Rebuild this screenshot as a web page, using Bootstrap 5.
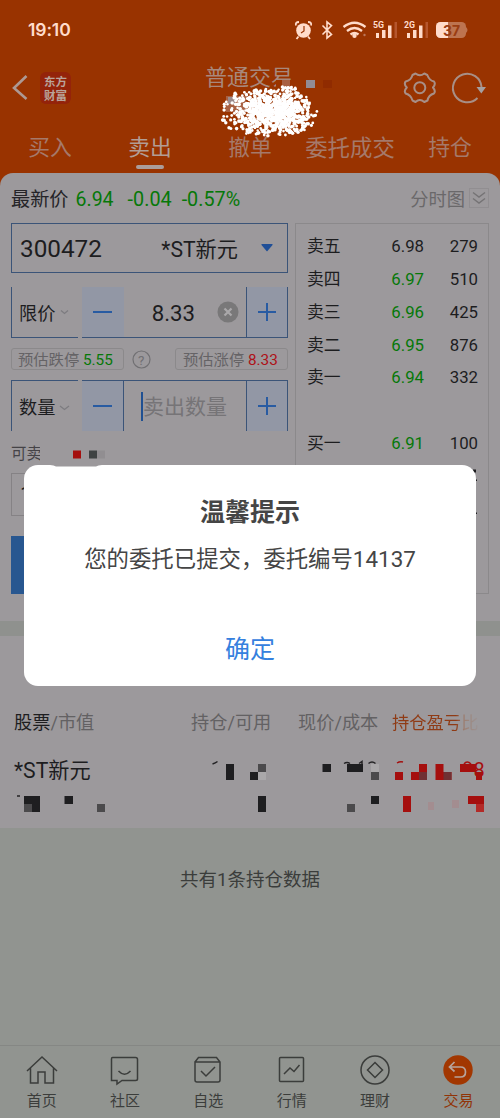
<!DOCTYPE html>
<html lang="zh-CN">
<head>
<meta charset="utf-8">
<meta name="viewport" content="width=device-width, initial-scale=1">
<title>普通交易</title>
<link rel="stylesheet" href="https://cdn.jsdelivr.net/npm/bootstrap@5.3.0/dist/css/bootstrap.min.css">
<script src="https://cdn.jsdelivr.net/npm/bootstrap@5.3.0/dist/js/bootstrap.bundle.min.js"></script>
<style>
body{margin:0;background:#919490;color:#1d1d1f;font-family:Roboto,"Noto Sans CJK SC",sans-serif;overflow:hidden}
svg{display:block;flex:none}
.screen{width:500px;height:1118px;overflow:hidden}
.top{background:#993300;color:#a99b98;height:187px}
.status{height:60px;padding:0 32px 0 28px;color:#ffdccb}
.clock{font:600 17.5px/60px Inter,sans-serif;letter-spacing:-.1px}
.titlebar{height:56px;padding:0 13px 0 11px}
.brand{width:31px;height:32px;border-radius:6px;background:#94230a;color:#b9a49c;font:600 11.5px/14px "Noto Sans CJK SC",sans-serif;margin-left:12px}
.title{left:205px;top:1px;font-size:22px;line-height:34px;color:#a8887c}
.tabs{height:57px;font-size:21.8px;line-height:64px;color:#a5796a}
.tabs .on{color:#b29d95}
.tabs .on i{position:absolute;width:28px;height:4px;border-radius:2px;background:#ab9d9a;left:36px;top:49px}
.panel{height:448px;margin-top:-14px;border-radius:13px 13px 0 0;background:#9c999c;padding:0 11px}
.quote{height:50px;font-size:19.5px;line-height:53px;color:#067808}
.form-col{width:277px}
.blue{border:1px solid #3b5478}
.stock{height:50px;font-size:24.3px;padding:2px 14px 0 8px}
.line-b{border-bottom:1px solid #3b5478}
.line-t{border-top:1px solid #3b5478}
.line-l{border-left:1px solid #3b5478}
.line-r{border-right:1px solid #3b5478}
.tint{background:#9297a5;width:42px}
.num-row{height:51px}
.pick{width:67px;padding:3px 0 0 7px;font-size:18.2px;margin-right:4px}
.hint{height:22px;border:1px solid #8b898b;border-radius:3px;font-size:15.3px;line-height:20px;color:#656366;padding:1px 0 0 6px}
.up{color:#ae1218}.down{color:#067808}
.caret-line{width:2px;height:29px;background:#205092}
.gap-band{height:15px;background:#8f918e}
.depth{width:194px;height:371px;border:1px solid #8b898b;padding:6px 10px 0 11px;font-size:16.8px}
.depth .d-flex{height:32.9px}
.depth .text-end{width:54px}
.hold{height:192px;background:#9c999c}
.colhead{font-size:18.2px;line-height:30px;color:#636163;padding:72px 0 0 14px;height:102px;white-space:nowrap}
.total{height:217px;padding-top:37px;font-size:18.5px;line-height:30px;color:#3b3d3b;text-align:center}
.bottom-nav{height:73px;border-top:1px solid #858784;font-size:15px;color:#3b3d3b}
.bottom-nav .cell{flex:0 0 83.35px;padding-top:8px}
.bottom-nav span{line-height:22px;margin-top:4px}
.stroke{fill:none;stroke:currentColor;stroke-width:1.5}
.dialog-box{left:24px;top:465px;width:452px;height:221px;border-radius:14px;background:#fff;color:#454545;text-align:center}
.mosaic{left:0;top:0;pointer-events:none}
</style>
</head>
<body>
<main class="screen position-relative d-flex flex-column">
<header class="top flex-shrink-0">
  <div class="status d-flex align-items-center justify-content-between">
    <span class="clock">19:10</span>
    <svg width="176" height="24" viewBox="293 18 176 24" fill="#ffdccb">
      <circle cx="304.500" cy="30.500" r="7.300"/><path d="M297 25.500Q296 22 300 22M309 22q4 0 3 3.500M299.500 36.500l-2 2.500M309 36.500l2 2.500" fill="none" stroke="#ffdccb" stroke-width="1.800"/><path d="M305 26v5l-3 2" fill="none" stroke="#993300" stroke-width="1.200"/>
      <path d="M323.500 25.500l9 9-4.500 3.500V22l4.500 3.500-9 9" fill="none" stroke="#ffdccb" stroke-width="1.600"/>
      <g fill="none" stroke="#ffdccb" stroke-width="2.300"><path d="M344.500 27q11-8.500 22 0M348 31q7.500-6 15 0M351.500 34.500q4-3 8 0"/></g><circle cx="355.500" cy="35.700" r="2.200"/><circle cx="365.500" cy="35" r="1.200" fill="#bc7659"/>
      <g font-family="Roboto" font-weight="700" font-size="8.800"><text x="374" y="28">5G</text><text x="405" y="28">2G</text></g>
      <path d="M377 33h3v5h-3zM383 30h3.500v8H383zM389 25.500h3.500V38H389zM408 33h3v5h-3zM414 30h3.500v8H414zM420 25.500h3.500V38H420z"/>
      <path fill="#b5562d" d="M395.500 22h2.500v16h-2.500zM426.500 22h2.500v16h-2.500z"/>
      <rect x="437" y="22" width="30" height="16" rx="4.500" fill="#bd7450"/><path d="M441.500 22h7.500v16h-7.500a4.500 4.500 0 0 1-4.500-4.500v-7a4.500 4.500 0 0 1 4.500-4.500z"/><path fill="#bd7450" d="M467 27q3 3 0 6z"/>
      <text x="444" y="35.500" font-family="Inter" font-weight="700" font-size="14" fill="#9a3d12">37</text>
    </svg>
  </div>
  <div class="titlebar position-relative d-flex align-items-center">
    <svg width="17" height="28" viewBox="0 0 17 28"><path d="M15.500 3L3 15l12.500 11" transform="translate(0 -1)" fill="none" stroke="#ad9993" stroke-width="2.600"/></svg>
    <div class="brand d-flex flex-column align-items-center justify-content-center"><span>东方</span><span>财富</span></div>
    <div class="title position-absolute">普通交易</div>
    <svg class="ms-auto" width="84" height="36" viewBox="403 70 84 36" fill="none" stroke="#a88f86" stroke-width="2">
      <path d="M412.500 75L415.500 73.500Q419.800 77 424.300 73.500L427.300 75Q429.300 80.500 434 81.500Q436 84 433 87.500Q436 91 434 93.500Q428.500 95 427.500 100.500L424.300 102Q419.800 98 415.500 102L412.500 100.500Q411 95 405.700 93.500Q403.500 91 406.800 87.500Q403.500 84 405.700 81.500Q411 80.500 412.500 75Z" stroke-linejoin="round"/><circle cx="419.800" cy="87.700" r="5.500"/>
      <path d="M481.500 87A14.300 14.300 0 1 0 477.500 98"/><path d="M476.500 87h9.500l-4.700 6.500z" fill="#a5a0a1" stroke="none"/>
    </svg>
  </div>
  <nav class="tabs d-flex text-center">
    <div class="col">买入</div><div class="col on position-relative">卖出<i></i></div><div class="col">撤单</div><div class="col text-nowrap" style="font-size:22.400px">委托成交</div><div class="col">持仓</div>
  </nav>
</header>

<section class="panel flex-shrink-0">
  <div class="quote d-flex">
    <span style="color:#252428;font-size:19.200px">最新价</span><span style="margin-left:7px">6.94</span><span style="margin-left:14px;font-size:19.800px">-0.04</span><span style="margin-left:10px;font-size:19.800px">-0.57%</span>
    <span class="ms-auto" style="color:#6a686a;font-size:18.300px">分时图</span>
    <svg class="align-self-center ms-1" width="20" height="20" viewBox="0 0 20 20" fill="none" stroke="#757375" stroke-width="1.400"><rect x=".5" y=".5" width="19" height="19" stroke="#918e91" stroke-width="1"/><path d="M4 4.500l6 4.500 6-4.500M4 10.500l6 4.500 6-4.500"/></svg>
  </div>
  <div class="d-flex justify-content-between">
    <div class="form-col">
      <div class="stock blue d-flex align-items-center"><span>300472</span><span class="ms-auto" style="font-size:21.200px;padding-top:2px">*ST新元</span><svg style="margin:-2px 0 0 23px" width="12" height="8"><path d="M1 0h10q1 0 .5 1L6.500 7q-.5.500-1 0L.5 1Q0 0 1 0" fill="#204f97"/></svg></div>
      <div class="num-row d-flex" style="margin-top:14px">
        <div class="pick line-l line-b d-flex align-items-center">限价<svg style="margin:-3px 0 0 5px" width="9" height="5"><path d="M1 .5l3.500 3 3.500-3" fill="none" stroke="#7d7c80" stroke-width="1.300"/></svg></div>
        <div class="tint line-b d-flex align-items-center justify-content-center"><svg width="20" height="20"><path d="M0 10h19" stroke="#285ba2" stroke-width="2"/></svg></div>
        <div class="line-b flex-grow-1 d-flex align-items-center justify-content-end" style="font-size:22.200px"><span style="padding-top:3px">8.33</span><svg style="margin:0 7px 0 22px" width="22" height="22"><circle cx="11" cy="11" r="10.500" fill="#797879"/><path d="M7.500 7.500l7 7m0-7l-7 7" stroke="#aaa8aa" stroke-width="2.200"/></svg></div>
        <div class="tint line-l line-r line-b d-flex align-items-center justify-content-center"><svg width="20" height="20"><path d="M1 10h18M10 1v18" stroke="#285ba2" stroke-width="2"/></svg></div>
      </div>
      <div class="d-flex align-items-center" style="height:42px">
        <div class="hint" style="width:113px">预估跌停 <span class="down">5.55</span></div>
        <svg style="margin-left:8px" width="19" height="19"><circle cx="9.500" cy="9.500" r="8.500" fill="none" stroke="#717073" stroke-width="1.200"/><text x="6" y="14.500" font-size="13.500" fill="#717073">?</text></svg>
        <div class="hint ms-auto" style="width:113px;padding-left:7px">预估涨停 <span class="up">8.33</span></div>
      </div>
      <div class="num-row d-flex">
        <div class="pick line-l line-t d-flex align-items-center">数量<svg class="ms-1" width="12" height="6"><path d="M1 1l4.500 3.500L10 1" fill="none" stroke="#7d7c80" stroke-width="1.300"/></svg></div>
        <div class="tint line-t line-r d-flex align-items-center justify-content-center"><svg width="20" height="20"><path d="M0 10h19" stroke="#285ba2" stroke-width="2"/></svg></div>
        <div class="line-t flex-grow-1 d-flex align-items-center" style="font-size:21px;color:#767477;padding-left:17px"><i class="caret-line"></i><span style="padding-top:3px">卖出数量</span></div>
        <div class="tint line-l line-r line-t d-flex align-items-center justify-content-center"><svg width="20" height="20"><path d="M1 10h18M10 1v18" stroke="#285ba2" stroke-width="2"/></svg></div>
      </div>
      <div style="font-size:15.500px;line-height:22px;margin-top:12px;height:30px;color:#454347">可卖</div>
      <div style="height:43px;border:1px solid #858285;padding:6px 8px;font-size:22px;line-height:30px">1</div>
      <div style="height:58px;background:#285790;margin-top:20px"></div>
    </div>
    <div class="depth">
      <div class="d-flex align-items-center"><span>卖五</span><span class="ms-auto">6.98</span><span class="text-end">279</span></div>
      <div class="d-flex align-items-center"><span>卖四</span><span class="ms-auto down">6.97</span><span class="text-end">510</span></div>
      <div class="d-flex align-items-center"><span>卖三</span><span class="ms-auto down">6.96</span><span class="text-end">425</span></div>
      <div class="d-flex align-items-center"><span>卖二</span><span class="ms-auto down">6.95</span><span class="text-end">876</span></div>
      <div class="d-flex align-items-center"><span>卖一</span><span class="ms-auto down">6.94</span><span class="text-end">332</span></div>
      <div class="d-flex"></div>
      <div class="d-flex align-items-center"><span>买一</span><span class="ms-auto down">6.91</span><span class="text-end">100</span></div>
    </div>
  </div>
</section>
<div class="gap-band flex-shrink-0"></div>
<section class="hold flex-shrink-0">
  <div class="colhead d-flex">
    <span style="width:177px"><span style="color:#1d1d1f">股票</span>/市值</span><span style="width:107px">持仓/可用</span><span style="width:94px">现价/成本</span><span style="font-size:17.300px;background:linear-gradient(90deg,#8f3b15 74%,#9c8074 84%,#9c999c 104%);background-clip:text;-webkit-background-clip:text;color:transparent">持仓盈亏比</span>
  </div>
  <div style="padding:16px 0 0 14px;font-size:21.200px;line-height:34px">*ST新元</div>
</section>
<div class="total flex-shrink-0">共有1条持仓数据</div>
<nav class="bottom-nav d-flex flex-shrink-0">
  <div class="cell d-flex flex-column align-items-center"><svg class="stroke" width="32" height="32" viewBox="0 0 32 32"><path d="M1 17L16 3l15 14M4.500 14v15H12V18h7v11h8.500V14"/></svg><span>首页</span></div>
  <div class="cell d-flex flex-column align-items-center"><svg class="stroke" width="32" height="32" viewBox="0 0 32 32"><path d="M3.500 3.500h23q2 0 2 2V25q0 1.500-2 1.500H13L8 30v-3.500H2.500V5q0-1.500 1-1.500M9.500 17q6 6.500 12 0"/></svg><span>社区</span></div>
  <div class="cell d-flex flex-column align-items-center"><svg class="stroke" width="32" height="32" viewBox="0 0 32 32"><path d="M3 8L6.500 3.500h18L28 8v18q0 2-2 2H5q-2 0-2-2V8h25M9 17l5 5 9-9"/></svg><span>自选</span></div>
  <div class="cell d-flex flex-column align-items-center"><svg class="stroke" width="32" height="32" viewBox="0 0 32 32"><rect x="3.500" y="3.500" width="24" height="24" rx="1"/><path d="M8 20l6-6 4 3.500 5.500-6.500"/></svg><span>行情</span></div>
  <div class="cell d-flex flex-column align-items-center"><svg class="stroke" width="32" height="32" viewBox="0 0 32 32"><circle cx="16" cy="16" r="14"/><path d="M16 8.500l7.500 7.500-7.500 7.500L8.500 16z"/></svg><span>理财</span></div>
  <div class="cell d-flex flex-column align-items-center" style="color:#913408"><svg width="32" height="32" viewBox="0 0 32 32"><circle cx="16" cy="16" r="14.700" fill="#a23701"/><path d="M12.500 8L7.500 13l5 4.500M7.500 13h11q5 0 5 5t-5 5h-6" fill="none" stroke="#b7a49c" stroke-width="1.700"/></svg><span>交易</span></div>
</nav>

<!-- privacy blocks and spray painted over account data -->
<svg class="mosaic position-absolute" width="500" height="1118" viewBox="0 0 500 1118">
  <path fill="#993300" d="M276 80h20v12h-20z"/><path fill="#a86042" d="M282 80h8v8h-8zM226 96h20v16h-20z"/><path fill="#9a8a8c" d="M228 97h7v7h-7z"/><path fill="#918c94" d="M306 80h9v8h-9z"/><path fill="#902b00" d="M323 80h9v8h-9z"/>
  <g id="spray" fill="#fff"></g>
  <path fill="#9c999c" d="M40 443h8v20h-8z"/>
  <path fill="#a50f0e" d="M73 450.500h8v8h-8z"/><path fill="#3f4343" d="M89 450.500h8v8h-8z"/><path fill="#918e91" d="M97 450.500h8v8h-8z"/>
  <g fill="#1e1e20"><path d="M226 764h8v16h-8zM250 772h8v8h-8zM258 796h8v16h-8zM322.500 764h8.500v8h-8.500zM347 764h16v8h-16zM371 796h8v8h-8zM24 796h16v16H24zM64.500 796h8.500v8h-8.500z"/></g>
  <g fill="#4b4a4c"><path d="M258 764h8v8h-8zM371 772h8v8h-8zM347 804h8v8h-8zM24 804h8v8h-8zM97 804h8v8h-8z"/></g>
  <path fill="#aaa8aa" d="M258 772h8v8h-8zM371 764h8v8h-8z"/>
  <g fill="none" stroke="#242325" stroke-width="1.500"><path d="M212.500 764q3-1 5-2.500M344 763.500q3-2 6 0M359 763.500l3-2v3M368.500 763.500q3.500-3 7 0M17 796h3"/></g>
  <path fill="#a50f0e" d="M395 772h8v8h-8zM419 764h8v8h-8zM411 772h8v8h-8zM435.500 764h8v8h8v8h-16zM460 764h16v8h-16zM476 772h6v8h-6zM403 796h8v16h-8zM468 796h16v8h-16z"/>
  <path fill="#703033" d="M419 772h8v8h-8zM443.500 772h8v8h-8z"/><path fill="#b32a28" d="M476 804h8v8h-8z"/>
  <path fill="#a38d90" d="M428 802h6v8h-6zM452 800h7v8h-7z"/>
  <path d="M397 763q3-2 6-1M464 764q3-4 7 0" fill="none" stroke="#a50f0e" stroke-width="1.500"/><text x="473.500" y="776.500" font-size="20" fill="#a50f0e">8</text>
  <g fill="#1d1d1f"><path d="M473 469.500h3v3h-3zM474 479.500h3v1.500h-3zM475 512.500h2v1.500h-2z"/></g>
</svg>
<div class="dialog-box position-absolute d-flex flex-column" role="dialog">
  <svg class="position-absolute" style="left:26px;top:0" width="52" height="2"><path d="M0 0h52q-4 0-6 1.500H6Q4 0 0 0" fill="#9c999c"/></svg>
  <div style="font-size:25px;font-weight:700;line-height:36px;margin-top:30px">温馨提示</div>
  <div style="font-size:22.400px;line-height:34px;margin-top:11px">您的委托已提交，委托编号14137</div>
  <div style="font-size:25px;line-height:38px;margin-top:55px;color:#3580de">确定</div>
</div>
</main>
<script>
let seed=17;
const rnd=()=>(seed=(seed*16807)%2147483647)/2147483647;
const gauss=()=>rnd()+rnd()+rnd()-1.5;
let dots="";
for(let i=0;i<1000;i++){
  const u=gauss()/1.35, v=gauss()/1.2;
  if(u*u+v*v>1) continue;
  const x=274+u*(u<0?57:48), y=111+v*26-u*1.5;
  dots+=`<circle cx="${x.toFixed(1)}" cy="${y.toFixed(1)}" r="${(1.2+rnd()*.7).toFixed(1)}"/>`;
}
document.getElementById("spray").innerHTML=dots;
</script>
</body>
</html>
